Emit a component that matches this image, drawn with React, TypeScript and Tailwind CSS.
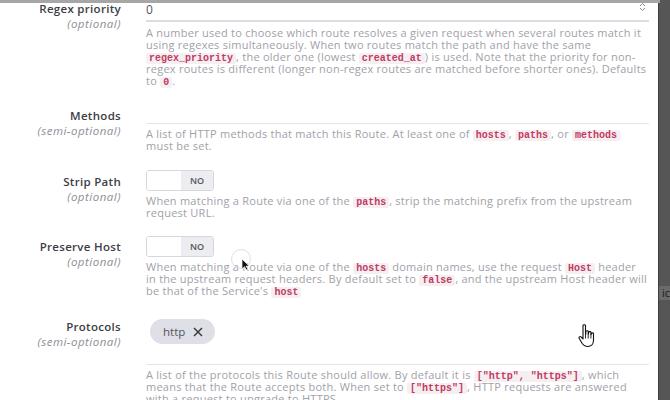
import React from "react";

const Code: React.FC<{ children: React.ReactNode }> = ({ children }) => (
  <code className="rounded-[2px] bg-[#f6eff2] px-[3px] font-['Liberation_Mono',monospace] text-[10px] leading-[0] font-bold tracking-normal text-[#c23a62]">
    {children}
  </code>
);

const Label: React.FC<{ title: string; hint: string; pad: string }> = ({ title, hint, pad }) => (
  <div className={`w-[121px] shrink-0 text-right leading-[15px] ${pad}`}>
    <div className="text-[11.5px] font-semibold tracking-[0.3px] text-[#3d3d45]">{title}</div>
    <div className="text-[11.5px] italic tracking-[0.5px] text-[#8e8e96]">{hint}</div>
  </div>
);

const Desc: React.FC<{ children: React.ReactNode; className?: string }> = ({ children, className }) => (
  <p className={`text-[11px] leading-[12px] tracking-[0.25px] text-[#a1a1a9] ${className ?? ""}`}>{children}</p>
);

const Toggle: React.FC = () => (
  <div className="flex h-[21px] w-[68px] overflow-hidden rounded-[3px] border border-[#d6d6de]">
    <div className="w-[34px] bg-white" />
    <div className="flex flex-1 items-center justify-center bg-[#ececf1] text-[9px] font-semibold text-[#55555d]">NO</div>
  </div>
);

const HandCursor: React.FC = () => (
  <svg width="20" height="26" viewBox="0 0 20 26" className="absolute left-[577px] top-[323px]">
    <path
      d="M6 2.5c0-1.1 2.5-1.1 2.5 0V11h.3V8.6c0-1.1 2.4-1.1 2.4 0V11h.3V9.4c0-1.1 2.4-1.1 2.4 0V11.5h.3v-.8c0-1.1 2.3-1.1 2.3 0V17c0 3.5-2 6.5-5.8 6.5H10c-2.4 0-3.6-1.2-4.8-3L2.1 15.3c-.7-1.1.9-2.4 1.9-1.4L6 16V2.5z"
      fill="#fff"
      stroke="#111"
      strokeWidth="1.1"
      strokeLinejoin="round"
    />
    <path d="M8.5 11v4.5M11.2 11v4.5M13.9 11.5v4" stroke="#111" strokeWidth="0.9" />
  </svg>
);

export default function App() {
  return (
    <div className="relative flex h-[400px] w-[670px] overflow-hidden bg-[#565656] font-['Open_Sans',sans-serif]">
      <div className="absolute left-0 top-0 h-[3px] w-[660px] bg-[#a6a6a6]" />

      <div className="w-[658px] shrink-0 bg-white">
        {/* Regex priority */}
        <div className="flex gap-[25px]">
          <Label title="Regex priority" hint="(optional)" pad="pt-[1px]" />
          <div className="w-[503px]">
            <div className="flex h-[22px] items-center justify-between border-b-2 border-[#dcdce2] pr-[3px] text-[12px] text-[#55555c]">
              <span>0</span>
              <svg width="7" height="10" viewBox="0 0 7 10" className="mb-[6px]">
                <path d="M1 4l2.5-2.5L6 4M1 6l2.5 2.5L6 6" fill="none" stroke="#8a8a90" strokeWidth="1" />
              </svg>
            </div>
            <Desc className="mt-[5px]">
              A number used to choose which route resolves a given request when several routes match it using
              regexes simultaneously. When two routes match the path and have the same <Code>regex_priority</Code>,
              the older one (lowest <Code>created_at</Code>) is used. Note that the priority for non-regex routes is
              different (longer non-regex routes are matched before shorter ones). Defaults to <Code>0</Code>.
            </Desc>
          </div>
        </div>

        {/* Methods */}
        <div className="mt-[15px] flex gap-[25px]">
          <Label title="Methods" hint="(semi-optional)" pad="pt-[6px]" />
          <div className="w-[503px]">
            <div className="h-[22px] border-b border-[#e6e6ea]" />
            <Desc className="mt-[4px]">
              A list of HTTP methods that match this Route. At least one of <Code>hosts</Code>, <Code>paths</Code>, or{" "}
              <Code>methods</Code> must be set.
            </Desc>
          </div>
        </div>

        {/* Strip Path */}
        <div className="mt-[18px] flex gap-[25px]">
          <Label title="Strip Path" hint="(optional)" pad="pt-[4px]" />
          <div className="w-[503px]">
            <Toggle />
            <Desc className="mt-[4px]">
              When matching a Route via one of the <Code>paths</Code>, strip the matching prefix from the upstream
              request URL.
            </Desc>
          </div>
        </div>

        {/* Preserve Host */}
        <div className="mt-[17px] flex gap-[25px]">
          <Label title="Preserve Host" hint="(optional)" pad="pt-[3px]" />
          <div className="w-[503px]">
            <Toggle />
            <Desc className="mt-[4px]">
              When matching a Route via one of the <Code>hosts</Code> domain names, use the request <Code>Host</Code>{" "}
              header in the upstream request headers. By default set to <Code>false</Code>, and the upstream Host
              header will be that of the Service's <Code>host</Code>
            </Desc>
          </div>
        </div>

        {/* Protocols */}
        <div className="mt-[21px] flex gap-[25px]">
          <Label title="Protocols" hint="(semi-optional)" pad="pt-[1px]" />
          <div className="w-[503px]">
            <div className="h-[47px] border-b border-[#e6e6ea]">
              <span className="ml-[4px] inline-flex h-[25px] items-center gap-[8px] rounded-full bg-[#dedfe7] pl-[13px] pr-[12px] text-[11.5px] text-[#55555d]">
                http
                <svg width="10" height="10" viewBox="0 0 10 10">
                  <path d="M1 1l8 8M9 1l-8 8" stroke="#3a3a40" strokeWidth="1.5" />
                </svg>
              </span>
            </div>
            <Desc className="mt-[4px]">
              A list of the protocols this Route should allow. By default it is <Code>["http", "https"]</Code>, which
              means that the Route accepts both. When set to <Code>["https"]</Code>, HTTP requests are answered with a
              request to upgrade to HTTPS.
            </Desc>
          </div>
        </div>
      </div>

      <div className="flex-1 border-l border-[#3e3e3e]">
        <div className="mt-[286px] bg-[#6a6a6a] pl-[3px] text-[11px] leading-[14px] text-[#1d1d1d]">ic</div>
      </div>

      {/* loading ring + cursors */}
      <div className="absolute left-[231px] top-[249px] h-[20px] w-[20px] rounded-full border-[1.5px] border-[#ecd9e0]" />
      <svg width="9" height="13" viewBox="0 0 9 13" className="absolute left-[241px] top-[258px]">
        <path d="M1 1v10l2.5-2.3L5.3 12l1.6-.7-1.8-3.2H8.2z" fill="#111" stroke="#fff" strokeWidth="0.7" />
      </svg>
      <HandCursor />
    </div>
  );
}
